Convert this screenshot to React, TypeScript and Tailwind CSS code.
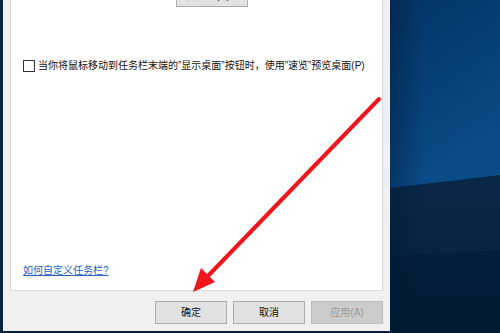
import React from 'react';

const font = "font-['Liberation_Sans','Noto_Sans_CJK_SC',sans-serif]";

function DialogButton({ label, disabled }: { label: string; disabled?: boolean }) {
  return (
    <button
      type="button"
      disabled={disabled}
      className={
        disabled
          ? 'flex h-[23px] w-[72px] items-center justify-center border border-[#bfbfbf] bg-[#cccccc] text-[10px] text-[#9a9a9a]'
          : 'flex h-[23px] w-[72px] items-center justify-center border border-[#adadad] bg-[#e1e1e1] text-[10px] text-[#111]'
      }
    >
      {label}
    </button>
  );
}

function Wallpaper() {
  return (
    <svg width="110" height="333" viewBox="0 0 110 333" className="block">
      <defs>
        <linearGradient id="upper" x1="0" y1="0" x2="0.4" y2="1">
          <stop offset="0" stopColor="#033566" />
          <stop offset="0.55" stopColor="#074078" />
          <stop offset="1" stopColor="#0b4c88" />
        </linearGradient>
        <linearGradient id="lower" x1="0" y1="0" x2="0" y2="1">
          <stop offset="0" stopColor="#06325f" />
          <stop offset="0.4" stopColor="#042648" />
          <stop offset="1" stopColor="#021a35" />
        </linearGradient>
        <linearGradient id="side" x1="0" y1="0" x2="1" y2="0">
          <stop offset="0" stopColor="#00152e" stopOpacity="0.35" />
          <stop offset="0.3" stopColor="#00152e" stopOpacity="0" />
        </linearGradient>
      </defs>
      <rect width="110" height="333" fill="url(#lower)" />
      <polygon points="0,0 110,0 110,175 0,188" fill="url(#upper)" />
      <polygon points="0,188 110,175 110,250 0,256" fill="#ffffff" opacity="0.025" />
      <rect width="110" height="333" fill="url(#side)" />
    </svg>
  );
}

export default function App() {
  return (
    <div className={`relative flex h-[333px] w-[500px] overflow-hidden bg-[#0b2240] ${font}`}>
      <div className="ml-[3px] flex h-[331px] w-[387px] flex-col bg-[#f0f0f0] px-[7px]">
        <div className="-mt-[20px] flex h-[311px] flex-col border border-[#d9d9d9] bg-white pl-[12px] pt-[2px]">
          <div className="flex h-[24px] items-center">
            <span className="w-[153px] text-[10px] text-[#111]">通知区域：</span>
            <div className="flex h-[24px] w-[72px] items-center justify-center border border-[#adadad] bg-[#e1e1e1] text-[10px] text-[#111]">
              自定义(C)...
            </div>
          </div>

          <label className="mt-[53px] flex items-center">
            <span className="h-[12px] w-[12px] border border-[#333] bg-white" />
            <span className="ml-[3px] text-[10px] leading-[12px] text-[#111]">
              当你将鼠标移动到任务栏末端的”显示桌面”按钮时，使用”速览”预览桌面(P)
            </span>
          </label>

          <a href="#" className="mb-[13px] mt-auto w-fit text-[10px] leading-[12px] text-[#2563c4] underline">
            如何自定义任务栏?
          </a>
        </div>

        <div className="mt-[10px] flex justify-end gap-[6px] pr-[-1px]">
          <DialogButton label="确定" />
          <DialogButton label="取消" />
          <DialogButton label="应用(A)" disabled />
        </div>
      </div>

      <div className="h-[333px] flex-1">
        <Wallpaper />
      </div>

      <svg className="pointer-events-none absolute left-0 top-0" width="500" height="333" viewBox="0 0 500 333">
        <line x1="379" y1="99" x2="206" y2="278" stroke="#f0141c" strokeWidth="4" strokeLinecap="round" />
        <polygon points="193,292 201,268 215,282" fill="#f0141c" />
      </svg>
    </div>
  );
}
